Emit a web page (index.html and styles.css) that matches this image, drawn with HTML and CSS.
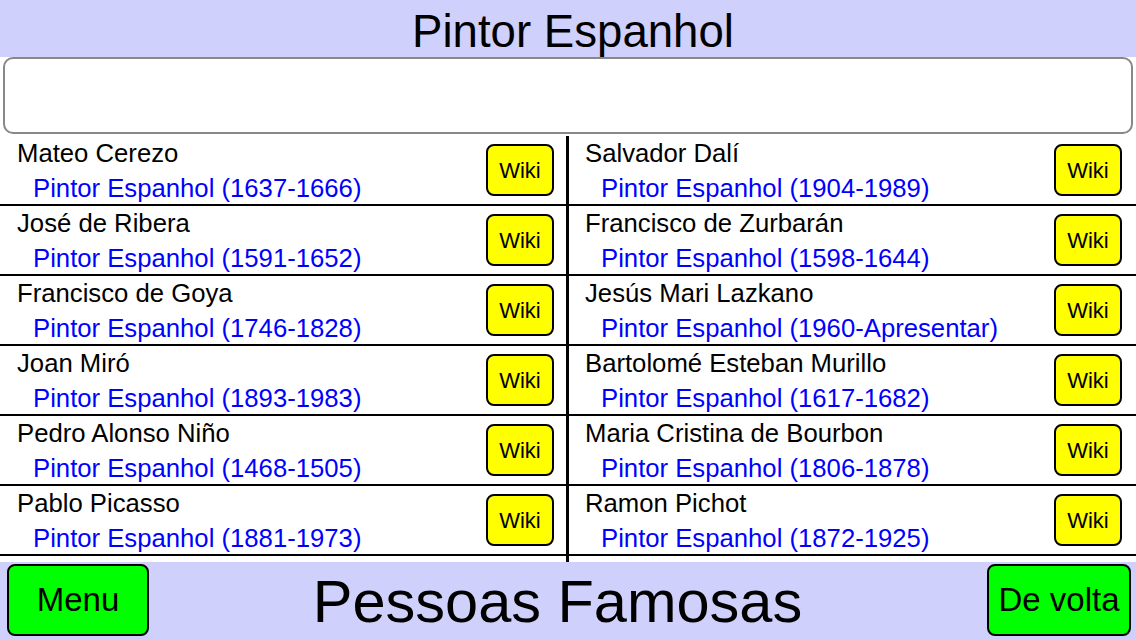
FILE: index.html
```html
<!DOCTYPE html>
<html>
<head>
    <link rel="stylesheet" href="styles.css">
</head>
<body>
    <div class="header">Pintor Espanhol</div>
    <div class="search"></div>
    <div class="list">
        <div class="col left">
            <div class="row">
                <div class="info"><div class="name">Mateo Cerezo</div><div class="sub">Pintor Espanhol (1637-1666)</div></div>
                <div class="wiki">Wiki</div>
            </div>
            <div class="row">
                <div class="info"><div class="name">José de Ribera</div><div class="sub">Pintor Espanhol (1591-1652)</div></div>
                <div class="wiki">Wiki</div>
            </div>
            <div class="row">
                <div class="info"><div class="name">Francisco de Goya</div><div class="sub">Pintor Espanhol (1746-1828)</div></div>
                <div class="wiki">Wiki</div>
            </div>
            <div class="row">
                <div class="info"><div class="name">Joan Miró</div><div class="sub">Pintor Espanhol (1893-1983)</div></div>
                <div class="wiki">Wiki</div>
            </div>
            <div class="row">
                <div class="info"><div class="name">Pedro Alonso Niño</div><div class="sub">Pintor Espanhol (1468-1505)</div></div>
                <div class="wiki">Wiki</div>
            </div>
            <div class="row">
                <div class="info"><div class="name">Pablo Picasso</div><div class="sub">Pintor Espanhol (1881-1973)</div></div>
                <div class="wiki">Wiki</div>
            </div>
        </div>
        <div class="divider"></div>
        <div class="col right">
            <div class="row">
                <div class="info"><div class="name">Salvador Dalí</div><div class="sub">Pintor Espanhol (1904-1989)</div></div>
                <div class="wiki">Wiki</div>
            </div>
            <div class="row">
                <div class="info"><div class="name">Francisco de Zurbarán</div><div class="sub">Pintor Espanhol (1598-1644)</div></div>
                <div class="wiki">Wiki</div>
            </div>
            <div class="row">
                <div class="info"><div class="name">Jesús Mari Lazkano</div><div class="sub">Pintor Espanhol (1960-Apresentar)</div></div>
                <div class="wiki">Wiki</div>
            </div>
            <div class="row">
                <div class="info"><div class="name">Bartolomé Esteban Murillo</div><div class="sub">Pintor Espanhol (1617-1682)</div></div>
                <div class="wiki">Wiki</div>
            </div>
            <div class="row">
                <div class="info"><div class="name">Maria Cristina de Bourbon</div><div class="sub">Pintor Espanhol (1806-1878)</div></div>
                <div class="wiki">Wiki</div>
            </div>
            <div class="row">
                <div class="info"><div class="name">Ramon Pichot</div><div class="sub">Pintor Espanhol (1872-1925)</div></div>
                <div class="wiki">Wiki</div>
            </div>
        </div>
    </div>
    <div class="footer">
        <div class="btn">Menu</div>
        <div class="footer-title">Pessoas Famosas</div>
        <div class="btn">De volta</div>
    </div>
</body>
</html>
```

FILE: styles.css
```css
body {
    margin: 0;
    font-family: "Liberation Sans", Arial, sans-serif;
    background-color: #fff;
    color: #000;
    width: 1136px;
    height: 640px;
    overflow: hidden;
}

.header {
    height: 57px;
    box-sizing: border-box;
    padding: 7px 0 0 10px;
    line-height: 50px;
    font-size: 45.6px;
    text-align: center;
    background-color: #d0d0fc;
}

.search {
    height: 77px;
    box-sizing: border-box;
    margin: 0 3px;
    border: 2px solid #888;
    border-radius: 10px;
    background-color: #fff;
}

.list {
    display: flex;
    height: 426px;
    margin-top: 2px;
}

.col {
    display: flex;
    flex-direction: column;
}

.col.left {
    width: 566px;
}

.col.right {
    flex: 1;
}

.divider {
    width: 3px;
    background-color: #000;
}

.row {
    display: flex;
    align-items: center;
    height: 70px;
    box-sizing: border-box;
    border-bottom: 2px solid #000;
}

.left .row {
    padding: 0 12px 0 17px;
}

.right .row {
    padding: 0 14px 0 16px;
}

.info {
    flex: 1;
    align-self: flex-start;
    padding-top: 2px;
    font-size: 25.7px;
    line-height: 30px;
    white-space: nowrap;
}

.sub {
    margin-top: 5px;
    padding-left: 16px;
    color: #0000ff;
}

.wiki {
    width: 68px;
    height: 52px;
    box-sizing: border-box;
    padding-top: 2px;
    border: 2px solid #000;
    border-radius: 8px;
    background-color: #ffff00;
    font-size: 22px;
    line-height: 46px;
    text-align: center;
}

.footer {
    display: flex;
    align-items: flex-start;
    height: 78px;
    padding: 2px 5px 0 7px;
    box-sizing: border-box;
    background-color: #d0d0fc;
}

.footer-title {
    flex: 1;
    padding-right: 21px;
    text-align: center;
    font-size: 59.5px;
    line-height: 76px;
}

.btn {
    width: 142px;
    height: 72px;
    box-sizing: border-box;
    border: 2px solid #000;
    border-radius: 8px;
    background-color: #00ff00;
    font-size: 33px;
    line-height: 68px;
    text-align: center;
}

.btn:last-child {
    width: 144px;
}
```
